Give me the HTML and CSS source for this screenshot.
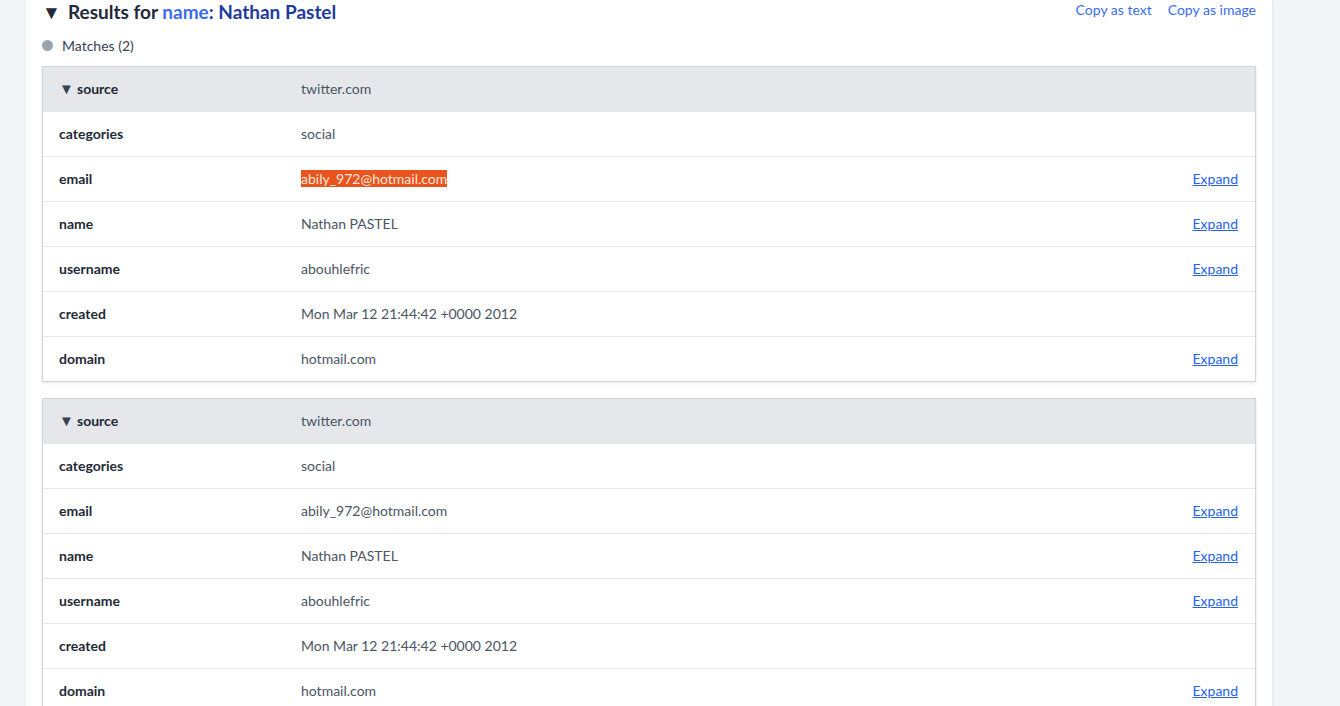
FILE: index.html
```html
<!DOCTYPE html>
<html lang="en">
<head>
    <meta charset="UTF-8">
    <meta name="viewport" content="width=device-width, initial-scale=1.0">
    <title>Results</title>
    <link rel="stylesheet" href="styles.css">
</head>
<body>
    <div class="panel">
        <!-- result header -->
        <div class="results-head">
            <h2 class="results-title"><span class="caret">&#9660;</span>Results for <span class="q-key">name</span><span class="q-val">: Nathan Pastel</span></h2>
            <div class="copy-links">
                <a href="#">Copy as text</a>
                <a href="#">Copy as image</a>
            </div>
        </div>

        <div class="matches"><span class="dot"></span>Matches (2)</div>

        <!-- match 1 -->
        <div class="card">
            <div class="row head">
                <div class="key"><span class="caret-sm">&#9660;</span>source</div>
                <div class="val">twitter.com</div>
            </div>
            <div class="row">
                <div class="key">categories</div>
                <div class="val">social</div>
            </div>
            <div class="row">
                <div class="key">email</div>
                <div class="val"><span class="mark">abily_972@hotmail.com</span></div>
                <a class="expand" href="#">Expand</a>
            </div>
            <div class="row">
                <div class="key">name</div>
                <div class="val">Nathan PASTEL</div>
                <a class="expand" href="#">Expand</a>
            </div>
            <div class="row">
                <div class="key">username</div>
                <div class="val">abouhlefric</div>
                <a class="expand" href="#">Expand</a>
            </div>
            <div class="row">
                <div class="key">created</div>
                <div class="val">Mon Mar 12 21:44:42 +0000 2012</div>
            </div>
            <div class="row">
                <div class="key">domain</div>
                <div class="val">hotmail.com</div>
                <a class="expand" href="#">Expand</a>
            </div>
        </div>

        <!-- match 2 -->
        <div class="card">
            <div class="row head">
                <div class="key"><span class="caret-sm">&#9660;</span>source</div>
                <div class="val">twitter.com</div>
            </div>
            <div class="row">
                <div class="key">categories</div>
                <div class="val">social</div>
            </div>
            <div class="row">
                <div class="key">email</div>
                <div class="val">abily_972@hotmail.com</div>
                <a class="expand" href="#">Expand</a>
            </div>
            <div class="row">
                <div class="key">name</div>
                <div class="val">Nathan PASTEL</div>
                <a class="expand" href="#">Expand</a>
            </div>
            <div class="row">
                <div class="key">username</div>
                <div class="val">abouhlefric</div>
                <a class="expand" href="#">Expand</a>
            </div>
            <div class="row">
                <div class="key">created</div>
                <div class="val">Mon Mar 12 21:44:42 +0000 2012</div>
            </div>
            <div class="row">
                <div class="key">domain</div>
                <div class="val">hotmail.com</div>
                <a class="expand" href="#">Expand</a>
            </div>
        </div>
    </div>
</body>
</html>
```

FILE: styles.css
```css
/* page */
html, body {
    margin: 0;
    padding: 0;
    height: 100%;
    overflow: hidden;
    background: #f3f4f6;
    font-family: Lato, "Noto Sans", sans-serif;
    font-size: 14px;
    color: #1f2937;
}

.panel {
    width: 1214px;
    margin-left: 26px;
    margin-top: -1px;
    padding: 0 16px 40px;
    min-height: 100%;
    background: #fff;
    box-shadow: 1px 0 3px rgba(0, 0, 0, 0.06);
}

/* header */
.results-head {
    display: flex;
    justify-content: space-between;
    align-items: flex-start;
}

.results-title {
    margin: 0;
    font-size: 19px;
    line-height: 26px;
    font-weight: 700;
    color: #1f2937;
}

.caret {
    display: inline-block;
    width: 26px;
    font-size: 19px;
}

.q-key { color: #3b6cf0; }
.q-val { color: #1e3a9e; }

.copy-links {
    display: flex;
    gap: 16px;
    padding-top: 2px;
}

.copy-links a {
    color: #3b6cf0;
    text-decoration: none;
    font-size: 14px;
}

/* matches toggle */
.matches {
    display: flex;
    align-items: center;
    height: 20px;
    margin-top: 10px;
    color: #374151;
}

.dot {
    width: 11px;
    height: 11px;
    border-radius: 50%;
    background: #9ca3af;
    margin-right: 9px;
}

/* result cards */
.card {
    margin-top: 11px;
    margin-bottom: 16px;
    border: 1px solid #d1d5db;
    box-shadow: 0 1px 3px rgba(0, 0, 0, 0.1);
}

.card + .card { margin-top: 0; }

.row {
    display: flex;
    align-items: center;
    height: 42px;
    padding: 0 17px 2px 16px;
    border-top: 1px solid #e5e7eb;
}

.row.head {
    background: #e5e7eb;
    border-top: none;
}

.key {
    width: 242px;
    font-weight: 700;
    color: #1f2937;
}

.caret-sm {
    display: inline-block;
    width: 18px;
    font-size: 15px;
    color: #374151;
}

.val {
    flex: 1;
    color: #4b5563;
}

.mark {
    background: #e8531e;
    color: #fde8dc;
}

.expand {
    color: #2563eb;
    text-decoration: underline;
}
```
